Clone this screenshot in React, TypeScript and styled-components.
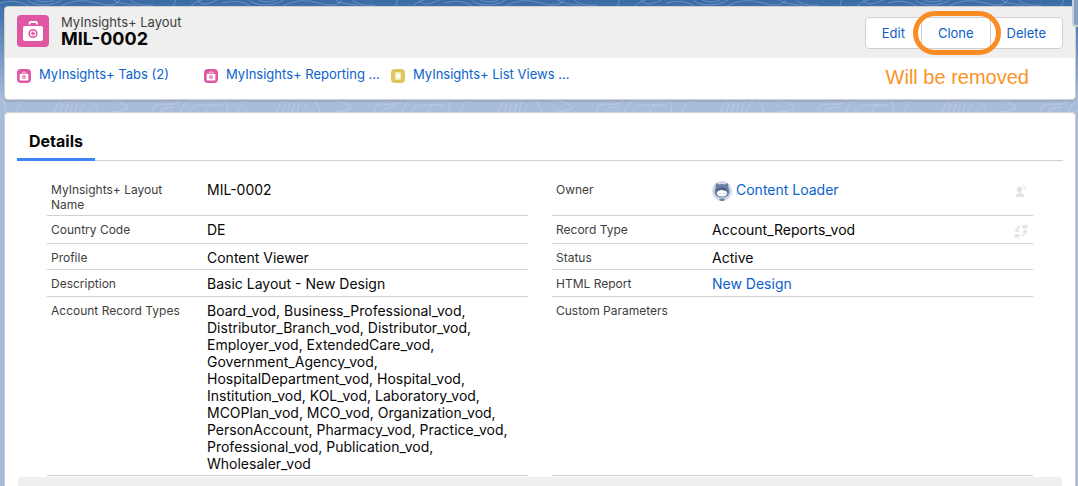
import React from "react";
import styled, { createGlobalStyle } from "styled-components";

const GlobalStyle = createGlobalStyle`
  *, *::before, *::after { box-sizing: border-box; }
  html { height: 100%; overflow: hidden; background: #a8bcdb; }
  body {
    margin: 0;
    color: #080707;
    font: 14px/17px Inter, "Liberation Sans", sans-serif;
  }
  a { color: #0b62cb; text-decoration: none; }
  a:hover { text-decoration: underline; }
`;

const Page = styled.div`
  position: relative;
  min-height: 100vh;
  padding: 6px 2px 0 4px;
  display: flex;
  flex-direction: column;
  gap: 12px;
  background: linear-gradient(#3a6ba6 0, #4173ac 8px, #a8bcdb 100px);
`;

const Backdrop = styled.svg`
  position: absolute;
  inset: 0;
  width: 100%;
  height: 112px;
`;

const Card = styled.section`
  position: relative;
  background: #fff;
  border: 1px solid #d2d0ce;
  border-radius: 4px;
  box-shadow: 0 2px 2px rgba(0, 0, 0, 0.1);
`;

const SideHandle = styled.div`
  position: absolute;
  top: -4px;
  right: -4px;
  width: 10px;
  height: 31px;
  border: 2px solid #c9ced3;
  border-radius: 4px;
  background: #82a1c2;
`;

const RecordHeader = styled.header`
  display: flex;
  align-items: flex-start;
  justify-content: space-between;
  height: 51px;
  padding: 8px 12px 0;
  background: #efefef;
  border-radius: 3px;
`;

const Identity = styled.div`
  display: flex;
  gap: 12px;
`;

const Tile = styled.span<{ $size: number; $color: string }>`
  flex: none;
  display: grid;
  place-items: center;
  width: ${(p) => p.$size}px;
  height: ${(p) => p.$size}px;
  border-radius: 4px;
  background: ${(p) => p.$color};
  svg { width: 100%; height: 100%; }
`;

const Title = styled.h1`
  margin: 0;
  font-size: 18px;
  line-height: 20px;
  font-weight: 700;
`;

const Kind = styled.div`
  font-size: 13px;
  line-height: 14px;
  color: #3e3e3c;
`;

const Actions = styled.div`
  display: flex;
  margin-top: 2px;
`;

const ActionButton = styled.button`
  height: 32px;
  margin-left: -1px;
  padding: 0 16px;
  border: 1px solid #d2d0ce;
  background: #fff;
  color: #0b5fc6;
  font: 13px/30px Inter, "Liberation Sans", sans-serif;
  &:first-child { border-radius: 4px 0 0 4px; }
  &:last-child { border-radius: 0 4px 4px 0; }
`;

const Marked = styled.span`
  position: relative;
  display: flex;
  ${ActionButton} { border-radius: 0; }
`;

const MarkRing = styled.span`
  position: absolute;
  z-index: 1;
  inset: -6px -10px -6px -9px;
  border: 5px solid #fb8c23;
  border-radius: 22px;
  pointer-events: none;
`;

const LinksBar = styled.nav`
  display: flex;
  align-items: flex-start;
  height: 41px;
  padding: 8px 12px 0;
`;

const QuickLink = styled.a`
  display: flex;
  gap: 8px;
  width: 187px;
  font-size: 13px;
  line-height: 17px;
  white-space: nowrap;
  ${Tile} { margin-top: 3px; }
`;

const Note = styled.p`
  margin: 0 34px 0 auto;
  color: #fb9327;
  font: 20px/22px "Liberation Sans", Arial, sans-serif;
`;

const DetailsCard = styled(Card)`
  padding: 9px 12px 0;
  min-height: 380px;
`;

const Tabs = styled.div`
  display: flex;
  border-bottom: 1px solid #d2d0ce;
`;

const Tab = styled.button`
  height: 39px;
  margin-bottom: -1px;
  padding: 2px 12px 0;
  border: 0;
  border-bottom: 3px solid #3b86f7;
  background: none;
  color: #080707;
  font: 700 16px/34px Inter, "Liberation Sans", sans-serif;
`;

const Fields = styled.dl`
  display: grid;
  grid-template-columns: 1fr 1fr;
  column-gap: 24px;
  margin: 15px 30px 0;
`;

const Field = styled.div`
  display: grid;
  grid-template-columns: 156px 1fr auto;
  align-items: start;
  padding: 5px 4px 3px;
  border-bottom: 1px solid #d2d0ce;
`;

const Label = styled.dt`
  padding: 1px 24px 0 0;
  font-size: 12px;
  line-height: 15px;
  color: #3e3e3c;
`;

const Value = styled.dd`
  display: flex;
  gap: 4px;
  margin: 0;
  max-width: 309px;
  a { line-height: 18px; }
`;

const IconButton = styled.button`
  display: grid;
  place-items: center;
  width: 16px;
  height: 19px;
  padding: 0;
  border: 0;
  background: none;
  color: #e4e3e2;
`;

const Footer = styled.div`
  height: 32px;
  margin: 1px 1px 0;
  border-radius: 4px;
  background: #efefef;
`;

const KitIcon = ({ color }: { color: string }) => (
  <svg viewBox="0 0 32 32" aria-hidden="true">
    <path d="M12.500 9.500V8.300Q12.500 7 13.800 7H18.700Q20 7 20 8.300V9.500" fill="none" stroke="#fff" strokeWidth="1.800" />
    <rect x="6" y="11" width="20" height="15" rx="2" fill="#fff" />
    <circle cx="16" cy="18.500" r="3.800" fill="none" stroke={color} strokeWidth="1.600" />
    <path d="M16 16.500v4M14 18.500h4" stroke={color} strokeWidth="1.500" />
  </svg>
);

const JarIcon = () => (
  <svg viewBox="0 0 14 14" aria-hidden="true">
    <rect x="4" y="3" width="6" height="8" rx="1.500" fill="#f3ebbb" />
    <rect x="5" y="5" width="4" height="4" fill="#fff" />
  </svg>
);

const Avatar = () => (
  <svg width="20" height="20" viewBox="0 0 20 20" aria-hidden="true">
    <circle cx="10" cy="10" r="10" fill="#cfd8e5" />
    <path d="M4 2l3 1.500q3-1 6 0L16 2l.5 5q2 4-.5 7.500-2 2-6 2t-6-2Q1.500 11 3.500 7z" fill="#6b7fa6" />
    <path d="M4.500 11q0-4.500 5.500-4.500t5.500 4.500z" fill="#4c5f86" />
    <path d="M5 12q0-3 3-2.500 1.500-1.500 3 0 4-.5 4 2.500 0 3.500-5 3.500t-5-3.500z" fill="#fff" />
    <circle cx="8" cy="12.500" r=".6" fill="#8797b5" />
    <circle cx="12" cy="12.500" r=".6" fill="#8797b5" />
    <path d="M7.500 17.500h5v2q-2.500 1-5 0z" fill="#6c83a9" />
  </svg>
);

const OwnerIcon = () => (
  <svg width="14" height="14" viewBox="0 0 14 14" aria-hidden="true">
    <circle cx="5.500" cy="5.500" r="2.800" fill="currentColor" />
    <path d="M4.500 7h2v2l3 1.500q1 .5 1 2.500h-9q0-2 1-2.500L4.500 9z" fill="currentColor" />
    <path d="M8 1.500q3.500 0 3.500 4M10 4.500L11.500 6 13 4.500" fill="none" stroke="currentColor" />
  </svg>
);

const SwapIcon = () => (
  <svg width="14" height="14" viewBox="0 0 14 14" aria-hidden="true">
    <path d="M8.500 1h5v3.500h-5zM.5 10h5v3.500h-5z" fill="currentColor" />
    <path d="M6.500 2.500Q3 2.500 3 7M1 5.500l2 2 2-2M7.500 11.500q3.500 0 3.500-4M9 8.500l2-2 2 2" fill="none" stroke="currentColor" strokeWidth="1.500" />
  </svg>
);

const Contours = () => (
  <Backdrop aria-hidden="true">
    <defs>
      <pattern id="contours" width="222" height="112" patternUnits="userSpaceOnUse">
        <g fill="none" stroke="#fff" strokeOpacity=".22">
          <path d="M0 98q8 5 5 14M102 98q16 2 24 7t-14 7" />
          <path d="M54 114q2-10 10-16M60 114q1-9 8-16M65 114q1-9 7-16M70 114q1-9 6-16M75 114q1-9 5-16M90 98q8 8 8 16" />
          <path d="M153 112q-2-9 12-8t15-4M160 112q2-5 14-5M180 114q2-10 10-14h34M188 114q3-8 12-9h22" />
          <path d="M16 112q2-8 12-14M80 112q3-7 8-14M206 112l8-14" strokeDasharray="3 3" />
          <path d="M0 3q18-5 30 4M25-2q6 7 18 7t22-7M33-2q5 4 12 4t13-4M61 6q16-9 36-3t24-5" />
          <path d="M110-2q8 6 16 6t18 5M129-1q8 8 24 6" />
          <path d="M174 7q0-7 4-9M190 7q4-5 15-8M196-2q4 9 14 5t12-5" />
        </g>
      </pattern>
    </defs>
    <rect width="100%" height="112" fill="url(#contours)" />
  </Backdrop>
);

const PINK = "#e056a3";

const recordTypes =
  "Board_vod, Business_Professional_vod, Distributor_Branch_vod, Distributor_vod, Employer_vod, ExtendedCare_vod, Government_Agency_vod, HospitalDepartment_vod, Hospital_vod, Institution_vod, KOL_vod, Laboratory_vod, MCOPlan_vod, MCO_vod, Organization_vod, PersonAccount, Pharmacy_vod, Practice_vod, Professional_vod, Publication_vod, Wholesaler_vod";

const fields: { label: string; value?: React.ReactNode; action?: React.ReactNode }[] = [
  { label: "MyInsights+ Layout Name", value: "MIL-0002" },
  {
    label: "Owner",
    value: <><Avatar /><a href="#owner">Content Loader</a></>,
    action: <IconButton aria-label="Change Owner"><OwnerIcon /></IconButton>,
  },
  { label: "Country Code", value: "DE" },
  {
    label: "Record Type",
    value: "Account_Reports_vod",
    action: <IconButton aria-label="Change Record Type"><SwapIcon /></IconButton>,
  },
  { label: "Profile", value: "Content Viewer" },
  { label: "Status", value: "Active" },
  { label: "Description", value: "Basic Layout - New Design" },
  { label: "HTML Report", value: <a href="#report">New Design</a> },
  { label: "Account Record Types", value: recordTypes },
  { label: "Custom Parameters" },
];

export default function App() {
  return (
    <Page>
      <GlobalStyle />
      <Contours />
      <Card>
        <RecordHeader>
          <Identity>
            <Tile $size={32} $color={PINK}><KitIcon color={PINK} /></Tile>
            <div>
              <Kind>MyInsights+ Layout</Kind>
              <Title>MIL-0002</Title>
            </div>
          </Identity>
          <Actions>
            <ActionButton>Edit</ActionButton>
            <Marked>
              <ActionButton>Clone</ActionButton>
              <MarkRing />
            </Marked>
            <ActionButton>Delete</ActionButton>
          </Actions>
        </RecordHeader>
        <LinksBar>
          <QuickLink href="#tabs">
            <Tile $size={14} $color={PINK}><KitIcon color={PINK} /></Tile>
            MyInsights+ Tabs (2)
          </QuickLink>
          <QuickLink href="#reporting">
            <Tile $size={14} $color={PINK}><KitIcon color={PINK} /></Tile>
            MyInsights+ Reporting ...
          </QuickLink>
          <QuickLink href="#list-views">
            <Tile $size={14} $color="#dfc75e"><JarIcon /></Tile>
            MyInsights+ List Views ...
          </QuickLink>
          <Note>Will be removed</Note>
        </LinksBar>
      </Card>
      <DetailsCard>
        <Tabs role="tablist">
          <Tab role="tab" aria-selected="true">Details</Tab>
        </Tabs>
        <Fields>
          {fields.map((field) => (
            <Field key={field.label}>
              <Label>{field.label}</Label>
              <Value>{field.value}</Value>
              {field.action}
            </Field>
          ))}
        </Fields>
        <Footer />
      </DetailsCard>
      <SideHandle />
    </Page>
  );
}
